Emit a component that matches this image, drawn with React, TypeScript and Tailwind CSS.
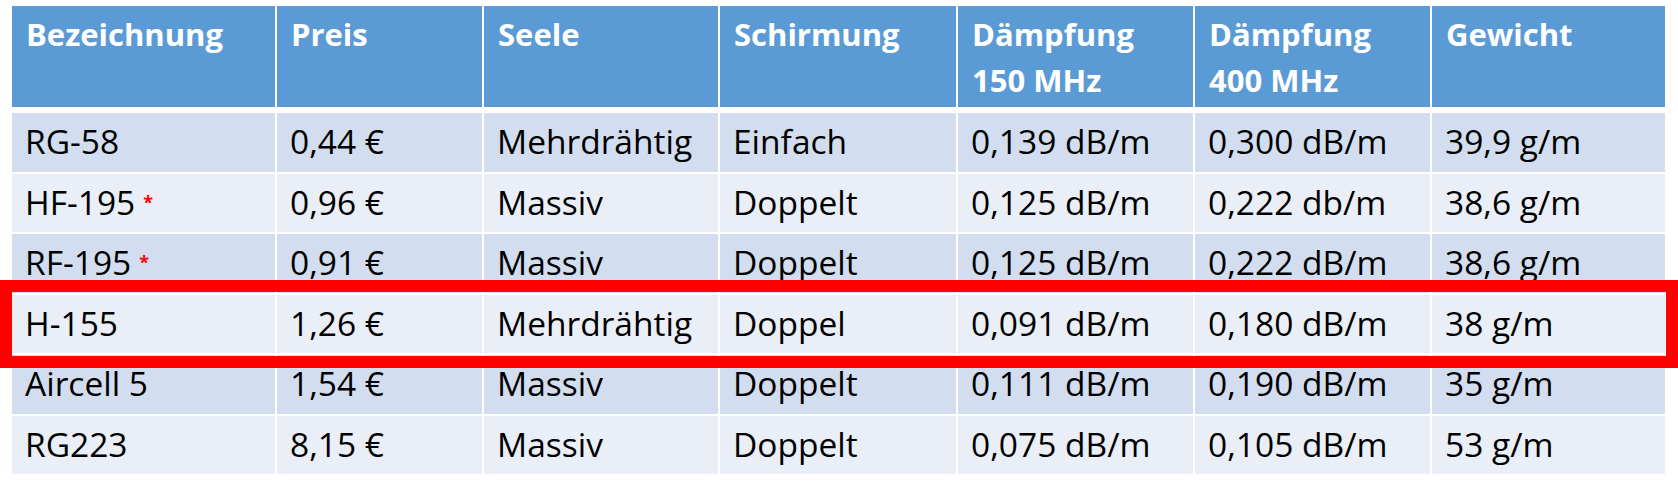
const headers = [
  ['Bezeichnung'],
  ['Preis'],
  ['Seele'],
  ['Schirmung'],
  ['Dämpfung', '150 MHz'],
  ['Dämpfung', '400 MHz'],
  ['Gewicht'],
];

const rows = [
  { name: 'RG-58', mark: false, cells: ['0,44 €', 'Mehrdrähtig', 'Einfach', '0,139 dB/m', '0,300 dB/m', '39,9 g/m'] },
  { name: 'HF-195', mark: true, cells: ['0,96 €', 'Massiv', 'Doppelt', '0,125 dB/m', '0,222 db/m', '38,6 g/m'] },
  { name: 'RF-195', mark: true, cells: ['0,91 €', 'Massiv', 'Doppelt', '0,125 dB/m', '0,222 dB/m', '38,6 g/m'] },
  { name: 'H-155', mark: false, cells: ['1,26 €', 'Mehrdrähtig', 'Doppel', '0,091 dB/m', '0,180 dB/m', '38 g/m'] },
  { name: 'Aircell 5', mark: false, cells: ['1,54 €', 'Massiv', 'Doppelt', '0,111 dB/m', '0,190 dB/m', '35 g/m'] },
  { name: 'RG223', mark: false, cells: ['8,15 €', 'Massiv', 'Doppelt', '0,075 dB/m', '0,105 dB/m', '53 g/m'] },
];

const cols = 'grid grid-cols-[263px_205px_234px_236px_235px_235px_233px] gap-x-[2px]';

const App = () => {
  return (
    <div className="relative w-[1678px] h-[490px] bg-white overflow-hidden font-['Open_Sans',sans-serif]">
      <div className="ml-[12px] pt-[6px] w-[1653px]">
        {/* header */}
        <div className={`${cols} h-[101px]`}>
          {headers.map((h, i) => (
            <div
              key={i}
              className="bg-[#5b9bd5] pl-[14px] pt-[5px] text-white font-bold text-[31px] leading-[46px]">
              {h.map((line) => (
                <div key={line}>{line}</div>
              ))}
            </div>
          ))}
        </div>

        {/* body */}
        <div className="mt-[6px] flex flex-col gap-y-[2px]">
          {rows.map((r, i) => (
            <div
              key={r.name}
              className={`${cols} h-[58.5px]`}>
              {[r.name, ...r.cells].map((c, j) => (
                <div
                  key={j}
                  className={`${i % 2 === 0 ? 'bg-[#d2deef]' : 'bg-[#eaeff7]'} flex items-center pl-[13px] pb-[2px] text-black text-[33.5px] leading-[46px] whitespace-nowrap`}>
                  <span>{c}</span>
                  {j === 0 && r.mark && (
                    <span className="ml-[8px] text-[#ff0000] font-bold text-[18px] leading-none">*</span>
                  )}
                </div>
              ))}
            </div>
          ))}
        </div>
      </div>

      {/* highlight box over H-155 */}
      <div className="absolute left-0 top-[280px] w-[1678px] h-[88px] border-[12.5px] border-[#ff0000]" />
    </div>
  );
};

export default App;
